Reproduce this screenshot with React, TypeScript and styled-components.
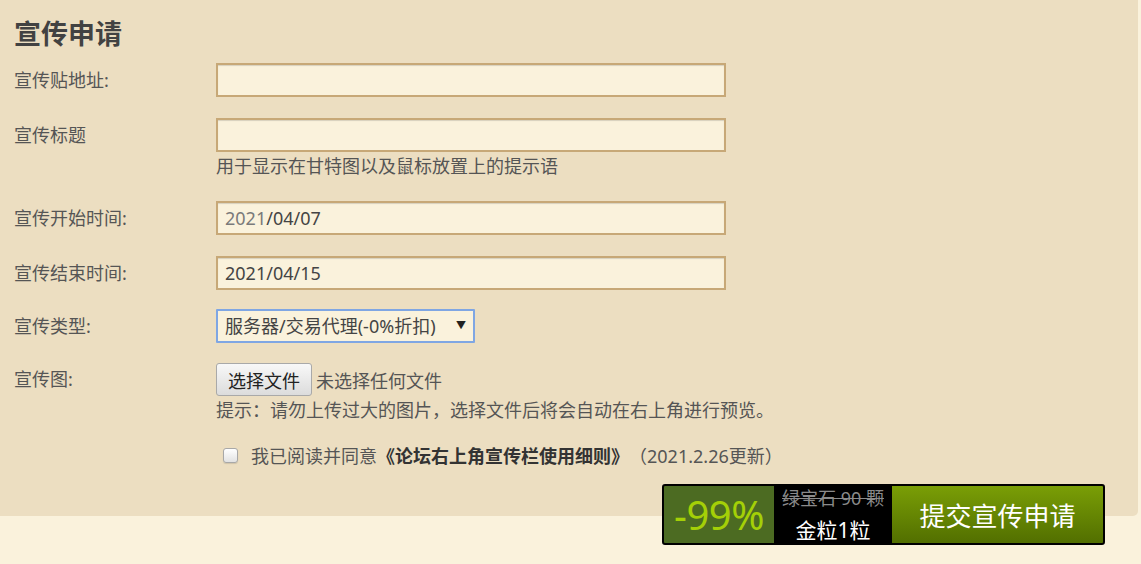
import React from "react";
import styled, { createGlobalStyle } from "styled-components";

const Global = createGlobalStyle`
  html, body {
    margin: 0;
    padding: 0;
    background: #faf2dc;
  }
  body {
    font-family: "Noto Sans", "Noto Sans CJK SC", sans-serif;
    color: #555;
    min-height: 564px;
  }
  * { box-sizing: border-box; }
`;

const Panel = styled.section`
  width: 1138px;
  height: 516px;
  background: #ecdec1;
  border-radius: 0 0 5px 0;
  padding: 17px 0 0 14px;
  display: flex;
  flex-direction: column;
`;

const Title = styled.h2`
  margin: 0 0 14px;
  font-size: 27px;
  line-height: 32px;
  font-weight: 700;
  color: #424242;
  font-family: "Noto Sans CJK SC", sans-serif;
`;

const Row = styled.div<{ $gap?: number }>`
  display: flex;
  align-items: flex-start;
  margin-top: ${(p) => p.$gap ?? 0}px;
`;

const Label = styled.div<{ $h?: number }>`
  width: 202px;
  flex: none;
  font-size: 18px;
  line-height: ${(p) => p.$h ?? 34}px;
  height: ${(p) => p.$h ?? 34}px;
  color: #555;
`;

const Field = styled.div`
  display: flex;
  flex-direction: column;
  align-items: flex-start;
`;

const TextInput = styled.input`
  width: 510px;
  height: 34px;
  border: 2px solid #c7a877;
  background: #faf2dc;
  box-shadow: inset 0 1px 1px rgba(0, 0, 0, 0.14);
  padding: 0 7px;
  font: inherit;
  font-size: 18px;
  color: #444;
  outline: none;
`;

const DateBox = styled.div`
  width: 510px;
  height: 34px;
  border: 2px solid #c7a877;
  background: #faf2dc;
  box-shadow: inset 0 1px 1px rgba(0, 0, 0, 0.14);
  padding: 0 7px;
  font-size: 18px;
  line-height: 30px;
  color: #444;
`;

const Dim = styled.span`
  color: #7a7a7a;
`;

const Hint = styled.div`
  font-size: 18px;
  line-height: 28px;
  height: 28px;
  color: #555;
`;

const SelectWrap = styled.div`
  position: relative;
  width: 259px;
  height: 34px;
`;

const Select = styled.select`
  appearance: none;
  -webkit-appearance: none;
  width: 100%;
  height: 100%;
  border: 2px solid #7fa6e3;
  border-radius: 1px;
  background: #faf2dc;
  padding: 0 0 0 7px;
  font: inherit;
  font-size: 18px;
  color: #444;
  outline: none;
`;

const Arrow = styled.span`
  position: absolute;
  right: 9px;
  top: 10px;
  font-size: 10px;
  line-height: 12px;
  color: #222;
  pointer-events: none;
`;

const FileLine = styled.div`
  display: flex;
  align-items: center;
  gap: 4px;
  height: 33px;
  font-size: 18px;
  color: #555;
`;

const FileButton = styled.button`
  height: 33px;
  padding: 0 11px;
  border: 1px solid #a9a9a9;
  border-radius: 3px;
  background: linear-gradient(#f8f8f8, #dcdcdc);
  font: inherit;
  font-size: 18px;
  color: #222;
  cursor: pointer;
`;

const AgreeRow = styled.label`
  display: flex;
  align-items: center;
  margin: 18px 0 0 209px;
  height: 28px;
  font-size: 18px;
  color: #555;
`;

const Check = styled.input`
  appearance: none;
  -webkit-appearance: none;
  width: 15px;
  height: 15px;
  margin: 0 13px 0 0;
  border: 1px solid #a8a8a8;
  border-radius: 3px;
  background: linear-gradient(#ffffff, #e2e2e2);
  box-shadow: 0 1px 1px rgba(0, 0, 0, 0.12);
`;

const Strong = styled.b`
  color: #333;
  font-weight: 700;
`;

const Actions = styled.div`
  display: flex;
  justify-content: flex-end;
  padding-right: 33px;
  margin-top: 16px;
`;

const BuyButton = styled.button`
  display: flex;
  width: 443px;
  height: 61px;
  padding: 0;
  border: 2px solid #000;
  border-radius: 3px;
  background: #000;
  cursor: pointer;
  font: inherit;
  overflow: hidden;
`;

const Discount = styled.div`
  width: 110px;
  height: 100%;
  background: #4c6b22;
  color: #a4d007;
  font-family: "Noto Sans", sans-serif;
  font-size: 40px;
  display: flex;
  align-items: center;
  justify-content: center;
  letter-spacing: -0.5px;
`;

const Price = styled.div`
  width: 118px;
  height: 100%;
  display: flex;
  flex-direction: column;
  align-items: center;
  justify-content: center;
  gap: 8px;
`;

const OldPrice = styled.span`
  font-size: 18px;
  line-height: 22px;
  color: #8a8a8a;
  text-decoration: line-through;
`;

const NewPrice = styled.span`
  font-size: 21px;
  line-height: 26px;
  color: #fff;
`;

const Submit = styled.div`
  flex: 1;
  height: 100%;
  background: linear-gradient(#7a9e06, #526f00);
  color: #fff;
  font-size: 26px;
  display: flex;
  align-items: center;
  justify-content: center;
`;

export default function App() {
  return (
    <>
      <Global />
      <Panel>
        <Title>宣传申请</Title>
        <Row>
          <Label>宣传贴地址:</Label>
          <TextInput type="text" />
        </Row>
        <Row $gap={21}>
          <Label>宣传标题</Label>
          <Field>
            <TextInput type="text" />
            <Hint>用于显示在甘特图以及鼠标放置上的提示语</Hint>
          </Field>
        </Row>
        <Row $gap={21}>
          <Label>宣传开始时间:</Label>
          <DateBox>
            <Dim>2021</Dim>/04/07
          </DateBox>
        </Row>
        <Row $gap={21}>
          <Label>宣传结束时间:</Label>
          <DateBox>2021/04/15</DateBox>
        </Row>
        <Row $gap={19}>
          <Label>宣传类型:</Label>
          <SelectWrap>
            <Select defaultValue="server">
              <option value="server">服务器/交易代理(-0%折扣)</option>
            </Select>
            <Arrow>▼</Arrow>
          </SelectWrap>
        </Row>
        <Row $gap={20}>
          <Label $h={33}>宣传图:</Label>
          <Field>
            <FileLine>
              <FileButton type="button">选择文件</FileButton>
              未选择任何文件
            </FileLine>
            <Hint>提示：请勿上传过大的图片，选择文件后将会自动在右上角进行预览。</Hint>
          </Field>
        </Row>
        <AgreeRow>
          <Check type="checkbox" />
          我已阅读并同意<Strong>《论坛右上角宣传栏使用细则》</Strong>（2021.2.26更新）
        </AgreeRow>
        <Actions>
          <BuyButton type="button">
            <Discount>-99%</Discount>
            <Price>
              <OldPrice>绿宝石 90 颗</OldPrice>
              <NewPrice>金粒1粒</NewPrice>
            </Price>
            <Submit>提交宣传申请</Submit>
          </BuyButton>
        </Actions>
      </Panel>
    </>
  );
}
